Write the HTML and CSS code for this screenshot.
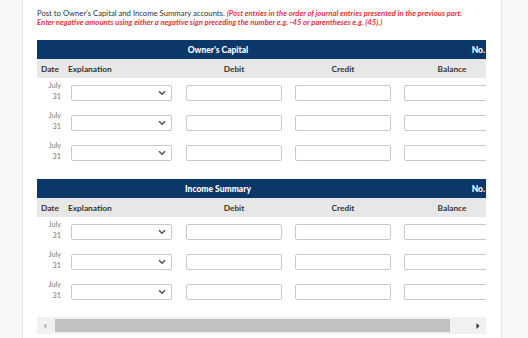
FILE: index.html
```html
<!DOCTYPE html>
<html>
<head>
<meta charset="utf-8">
<link rel="stylesheet" href="styles.css">
</head>
<body>
<div class="panel">
  <p class="intro">Post to Owner's Capital and Income Summary accounts. <em class="note">(Post entries in the order of journal entries presented in the previous part.<br>Enter negative amounts using either a negative sign preceding the number e.g. -45 or parentheses e.g. (45).)</em></p>
  <div class="scroller">
    <div class="ledger">
      <div class="title"><span class="title-name">Owner's Capital</span><span class="title-no">No.</span></div>
      <div class="cols"><span class="c-date">Date</span><span class="c-expl">Explanation</span><span class="c-num">Debit</span><span class="c-num">Credit</span><span class="c-num">Balance</span></div>
      <div class="row"><div class="date">July<br>31</div><div class="sel"><svg class="chev" viewBox="0 0 8 6"><path d="M1 1.2 L4 4.2 L7 1.2" /></svg></div><div class="inp"></div><div class="inp"></div><div class="inp"></div></div>
      <div class="row"><div class="date">July<br>31</div><div class="sel"><svg class="chev" viewBox="0 0 8 6"><path d="M1 1.2 L4 4.2 L7 1.2" /></svg></div><div class="inp"></div><div class="inp"></div><div class="inp"></div></div>
      <div class="row"><div class="date">July<br>31</div><div class="sel"><svg class="chev" viewBox="0 0 8 6"><path d="M1 1.2 L4 4.2 L7 1.2" /></svg></div><div class="inp"></div><div class="inp"></div><div class="inp"></div></div>
    </div>
    <div class="ledger">
      <div class="title"><span class="title-name">Income Summary</span><span class="title-no">No.</span></div>
      <div class="cols"><span class="c-date">Date</span><span class="c-expl">Explanation</span><span class="c-num">Debit</span><span class="c-num">Credit</span><span class="c-num">Balance</span></div>
      <div class="row"><div class="date">July<br>31</div><div class="sel"><svg class="chev" viewBox="0 0 8 6"><path d="M1 1.2 L4 4.2 L7 1.2" /></svg></div><div class="inp"></div><div class="inp"></div><div class="inp"></div></div>
      <div class="row"><div class="date">July<br>31</div><div class="sel"><svg class="chev" viewBox="0 0 8 6"><path d="M1 1.2 L4 4.2 L7 1.2" /></svg></div><div class="inp"></div><div class="inp"></div><div class="inp"></div></div>
      <div class="row"><div class="date">July<br>31</div><div class="sel"><svg class="chev" viewBox="0 0 8 6"><path d="M1 1.2 L4 4.2 L7 1.2" /></svg></div><div class="inp"></div><div class="inp"></div><div class="inp"></div></div>
    </div>
  </div>
  <div class="hscroll">
    <div class="arrow-btn"><svg viewBox="0 0 6 8"><path d="M4.5 1 L1.5 4 L4.5 7 Z" fill="#b5b5b5"/></svg></div>
    <div class="track"><div class="thumb"></div></div>
    <div class="arrow-btn"><svg viewBox="0 0 6 8"><path d="M1.5 1 L4.5 4 L1.5 7 Z" fill="#333"/></svg></div>
  </div>
</div>
</body>
</html>
```

FILE: styles.css
```css
* { box-sizing: border-box; }
html, body { margin: 0; padding: 0; }
body {
  background: #f7f7f7;
  font-family: Lato, "Open Sans", sans-serif;
  color: #333;
  height: 338px;
  overflow: hidden;
}
.panel {
  margin-left: 22px;
  width: 480px;
  height: 338px;
  background: #fff;
  border-left: 1px solid #e2e2e2;
  border-right: 1px solid #e2e2e2;
  padding: 9px 0 0 14px;
}
.intro {
  margin: 0 0 13px 0;
  font-size: 7.7px;
  line-height: 9px;
  color: #333;
  white-space: nowrap;
}
.note {
  color: #e3343b;
  font-weight: bold;
  font-style: italic;
}
.scroller {
  width: 449px;
  overflow: hidden;
}
.ledger { margin-bottom: 11px; }
.ledger + .ledger { margin-bottom: 10px; }
.title, .cols, .row {
  display: grid;
  grid-template-columns: 34px 115px 109px 109px 82px;
  width: 449px;
}
.title {
  background: #0b3769;
  color: #fff;
  font-weight: 900;
  font-size: 8.5px;
  height: 19px;
  align-items: center;
}
.title-name {
  grid-column: 1 / 5;
  text-align: center;
  padding-right: 5px;
}
.title-no {
  grid-column: 5;
  text-align: right;
  padding-right: 1px;
}
.cols {
  background: #e7e7e7;
  height: 19px;
  align-items: center;
  font-weight: bold;
  font-size: 8.3px;
  color: #333;
}
.c-date { padding-left: 4px; }
.c-expl { margin-left: -3px; }
.c-num { width: 96px; text-align: center; }
.row { height: 30px; }
.date {
  font-size: 7.3px;
  line-height: 11px;
  color: #777;
  text-align: right;
  padding: 2px 10px 0 0;
}
.sel, .inp {
  margin-top: 7px;
  height: 16px;
  border: 1px solid #c9c9c9;
  border-radius: 2px;
  background: #fff;
}
.sel {
  width: 101px;
  display: flex;
  justify-content: flex-end;
  align-items: center;
  padding-right: 5px;
}
.chev {
  width: 8px;
  height: 6px;
  fill: none;
  stroke: #555;
  stroke-width: 1.6;
}
.inp { width: 96px; }
.hscroll {
  width: 449px;
  height: 17px;
  background: #f1f1f1;
  display: flex;
  align-items: center;
}
.arrow-btn {
  width: 16px;
  height: 17px;
  display: flex;
  align-items: center;
  justify-content: center;
}
.arrow-btn svg { width: 6px; height: 8px; }
.track {
  flex: 1;
  height: 13px;
  padding-left: 2px;
}
.thumb {
  width: 395px;
  height: 13px;
  background: #c1c1c1;
}
```
